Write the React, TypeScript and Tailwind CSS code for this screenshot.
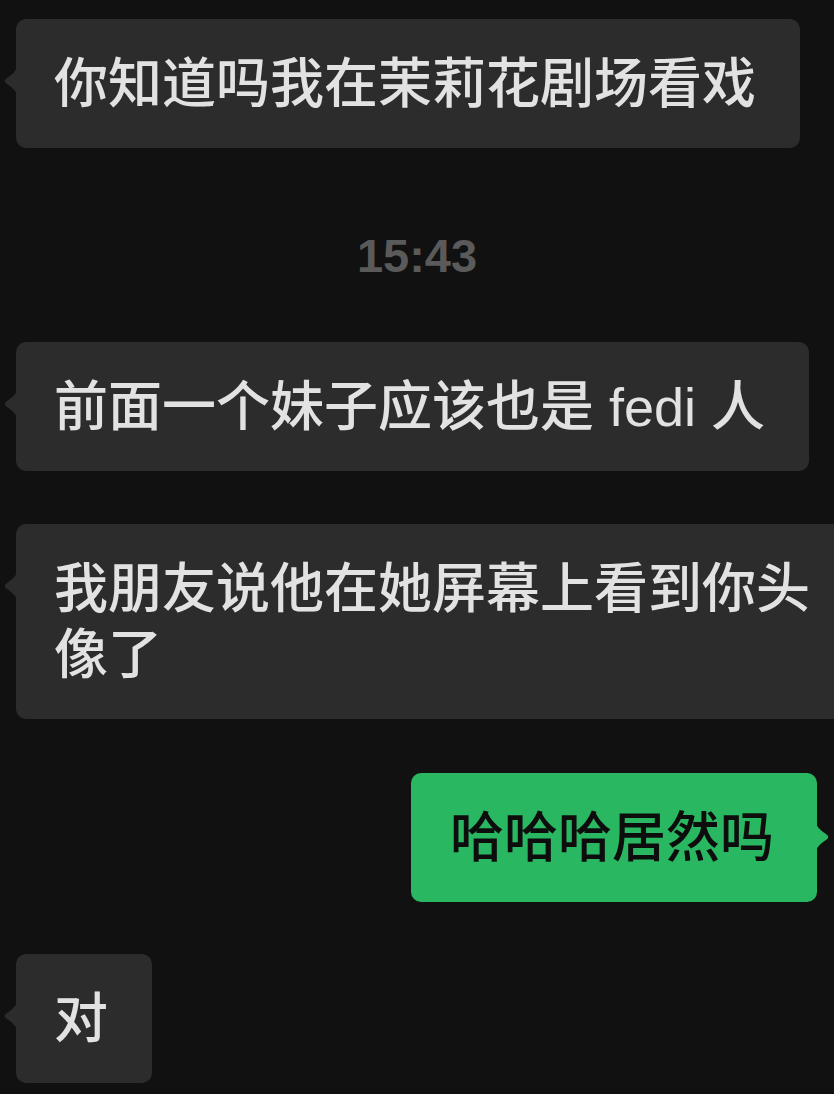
import React from "react";

const cjk = "font-['Liberation_Sans','Noto_Sans_CJK_SC','Noto_Sans_CJK_JP',sans-serif] font-medium";

function LeftTail() {
  return (
    <svg
      className="absolute left-[-15px] top-[47px]"
      width="16"
      height="30"
      viewBox="0 0 16 30"
    >
      <path
        d="M16 0 C16 4 12 8 6 12 Q1.5 15 6 18 C12 22 16 26 16 30 Z"
        fill="#2c2c2c"
      />
    </svg>
  );
}

function RightTail() {
  return (
    <svg
      className="absolute right-[-15px] top-[49px]"
      width="16"
      height="30"
      viewBox="0 0 16 30"
    >
      <path
        d="M0 0 C0 4 4 8 10 12 Q14.5 15 10 18 C4 22 0 26 0 30 Z"
        fill="#29b762"
      />
    </svg>
  );
}

function LeftBubble({ text, className = "" }: { text: string; className?: string }) {
  return (
    <div className={`relative ml-[16px] self-start rounded-[10px] bg-[#2c2c2c] pl-[38px] pr-[44px] pt-[32px] pb-[31px] ${className}`}>
      <LeftTail />
      <p className={`${cjk} text-[54px] leading-[66px] text-[#e2e2e2]`}>{text}</p>
    </div>
  );
}

export default function App() {
  return (
    <div className="w-[834px] min-h-[1094px] overflow-hidden bg-[#111111]">
      <div className="flex flex-col pt-[19px] pb-[11px]">
        <LeftBubble text="你知道吗我在茉莉花剧场看戏" />
        <div className="h-[194px] pt-[84px] text-center">
          <span className="font-['Liberation_Sans',sans-serif] font-bold text-[47px] leading-[48px] text-[#5a5a5a]">
            15:43
          </span>
        </div>
        <LeftBubble text="前面一个妹子应该也是 fedi 人" />
        <LeftBubble className="mt-[53px] w-[840px]" text="我朋友说他在她屏幕上看到你头像了" />
        <div className="relative mt-[54px] mr-[17px] self-end rounded-[10px] bg-[#29b762] pl-[39px] pr-[43px] pt-[32px] pb-[31px]">
          <RightTail />
          <p className={`${cjk} text-[54px] leading-[66px] text-[#0d0d0d]`}>哈哈哈居然吗</p>
        </div>
        <LeftBubble className="mt-[52px]" text="对" />
      </div>
    </div>
  );
}
